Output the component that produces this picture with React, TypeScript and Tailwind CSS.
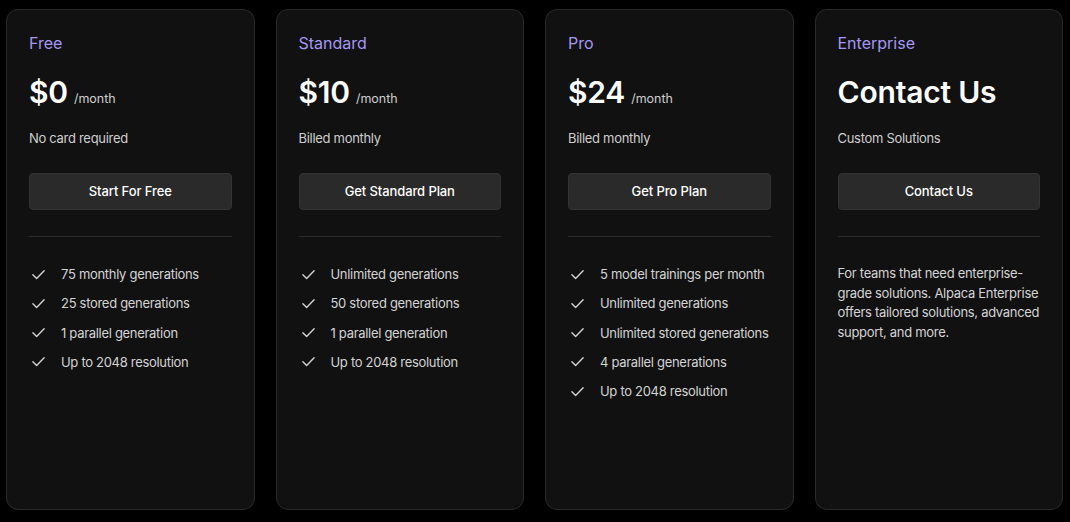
import React from "react";

type Plan = {
  name: string;
  price: string;
  per?: boolean;
  sub: string;
  cta: string;
  features?: string[];
  text?: string;
};

const plans: Plan[] = [
  {
    name: "Free",
    price: "$0",
    per: true,
    sub: "No card required",
    cta: "Start For Free",
    features: ["75 monthly generations", "25 stored generations", "1 parallel generation", "Up to 2048 resolution"],
  },
  {
    name: "Standard",
    price: "$10",
    per: true,
    sub: "Billed monthly",
    cta: "Get Standard Plan",
    features: ["Unlimited generations", "50 stored generations", "1 parallel generation", "Up to 2048 resolution"],
  },
  {
    name: "Pro",
    price: "$24",
    per: true,
    sub: "Billed monthly",
    cta: "Get Pro Plan",
    features: [
      "5 model trainings per month",
      "Unlimited generations",
      "Unlimited stored generations",
      "4 parallel generations",
      "Up to 2048 resolution",
    ],
  },
  {
    name: "Enterprise",
    price: "Contact Us",
    sub: "Custom Solutions",
    cta: "Contact Us",
    text: "For teams that need enterprise-grade solutions. Alpaca Enterprise offers tailored solutions, advanced support, and more.",
  },
];

function Check() {
  return (
    <svg width="15" height="15" viewBox="0 0 24 24" fill="none" stroke="#d4d4d4" strokeWidth="2.2" strokeLinecap="round" strokeLinejoin="round">
      <path d="M3 12.5l6 6L21 6" />
    </svg>
  );
}

export default function App() {
  return (
    <div
      className="w-[1070px] h-[522px] bg-black flex gap-[21px] pl-[6px] pr-[7px] pt-[9px] pb-[12px]"
      style={{ fontFamily: "Inter, 'Noto Sans', sans-serif" }}
    >
      {plans.map((p) => (
        <div
          key={p.name}
          className="flex-1 flex flex-col bg-[#111111] border border-[#2a2a2a] rounded-[12px] px-[22px] pt-[21px]"
        >
          <div className="text-[16px] leading-[24px] text-[#a598f2]">{p.name}</div>
          <div className="flex items-baseline mt-[17px] h-[40px]">
            <span className="text-[30px] leading-[40px] font-semibold text-white tracking-[-0.2px]">{p.price}</span>
            {p.per && <span className="ml-[6px] text-[12.5px] text-[#cfcfcf]">/month</span>}
          </div>
          <div className="mt-[16px] text-[13px] leading-[20px] tracking-[-0.3px] text-[#cfcfcf]">{p.sub}</div>
          <button className="mt-[25px] h-[37px] w-full rounded-[4px] bg-[#2a2a2a] border border-[#333] text-white text-[13px] tracking-[-0.1px] font-medium">
            {p.cta}
          </button>
          <div className="mt-[26px] h-px bg-[#2c2c2c]" />
          {p.features && (
            <ul className="mt-[27px] flex flex-col gap-[9.25px]">
              {p.features.map((f) => (
                <li key={f} className="flex items-center text-[13px] leading-[20px] tracking-[-0.3px] text-[#d4d4d4]">
                  <span className="w-[24px] pl-[2px] flex items-center">
                    <Check />
                  </span>
                  <span className="ml-[8px]">{f}</span>
                </li>
              ))}
            </ul>
          )}
          {p.text && (
            <p className="mt-[27px] text-[13px] leading-[19.6px] tracking-[-0.3px] text-[#d4d4d4]">{p.text}</p>
          )}
        </div>
      ))}
    </div>
  );
}
